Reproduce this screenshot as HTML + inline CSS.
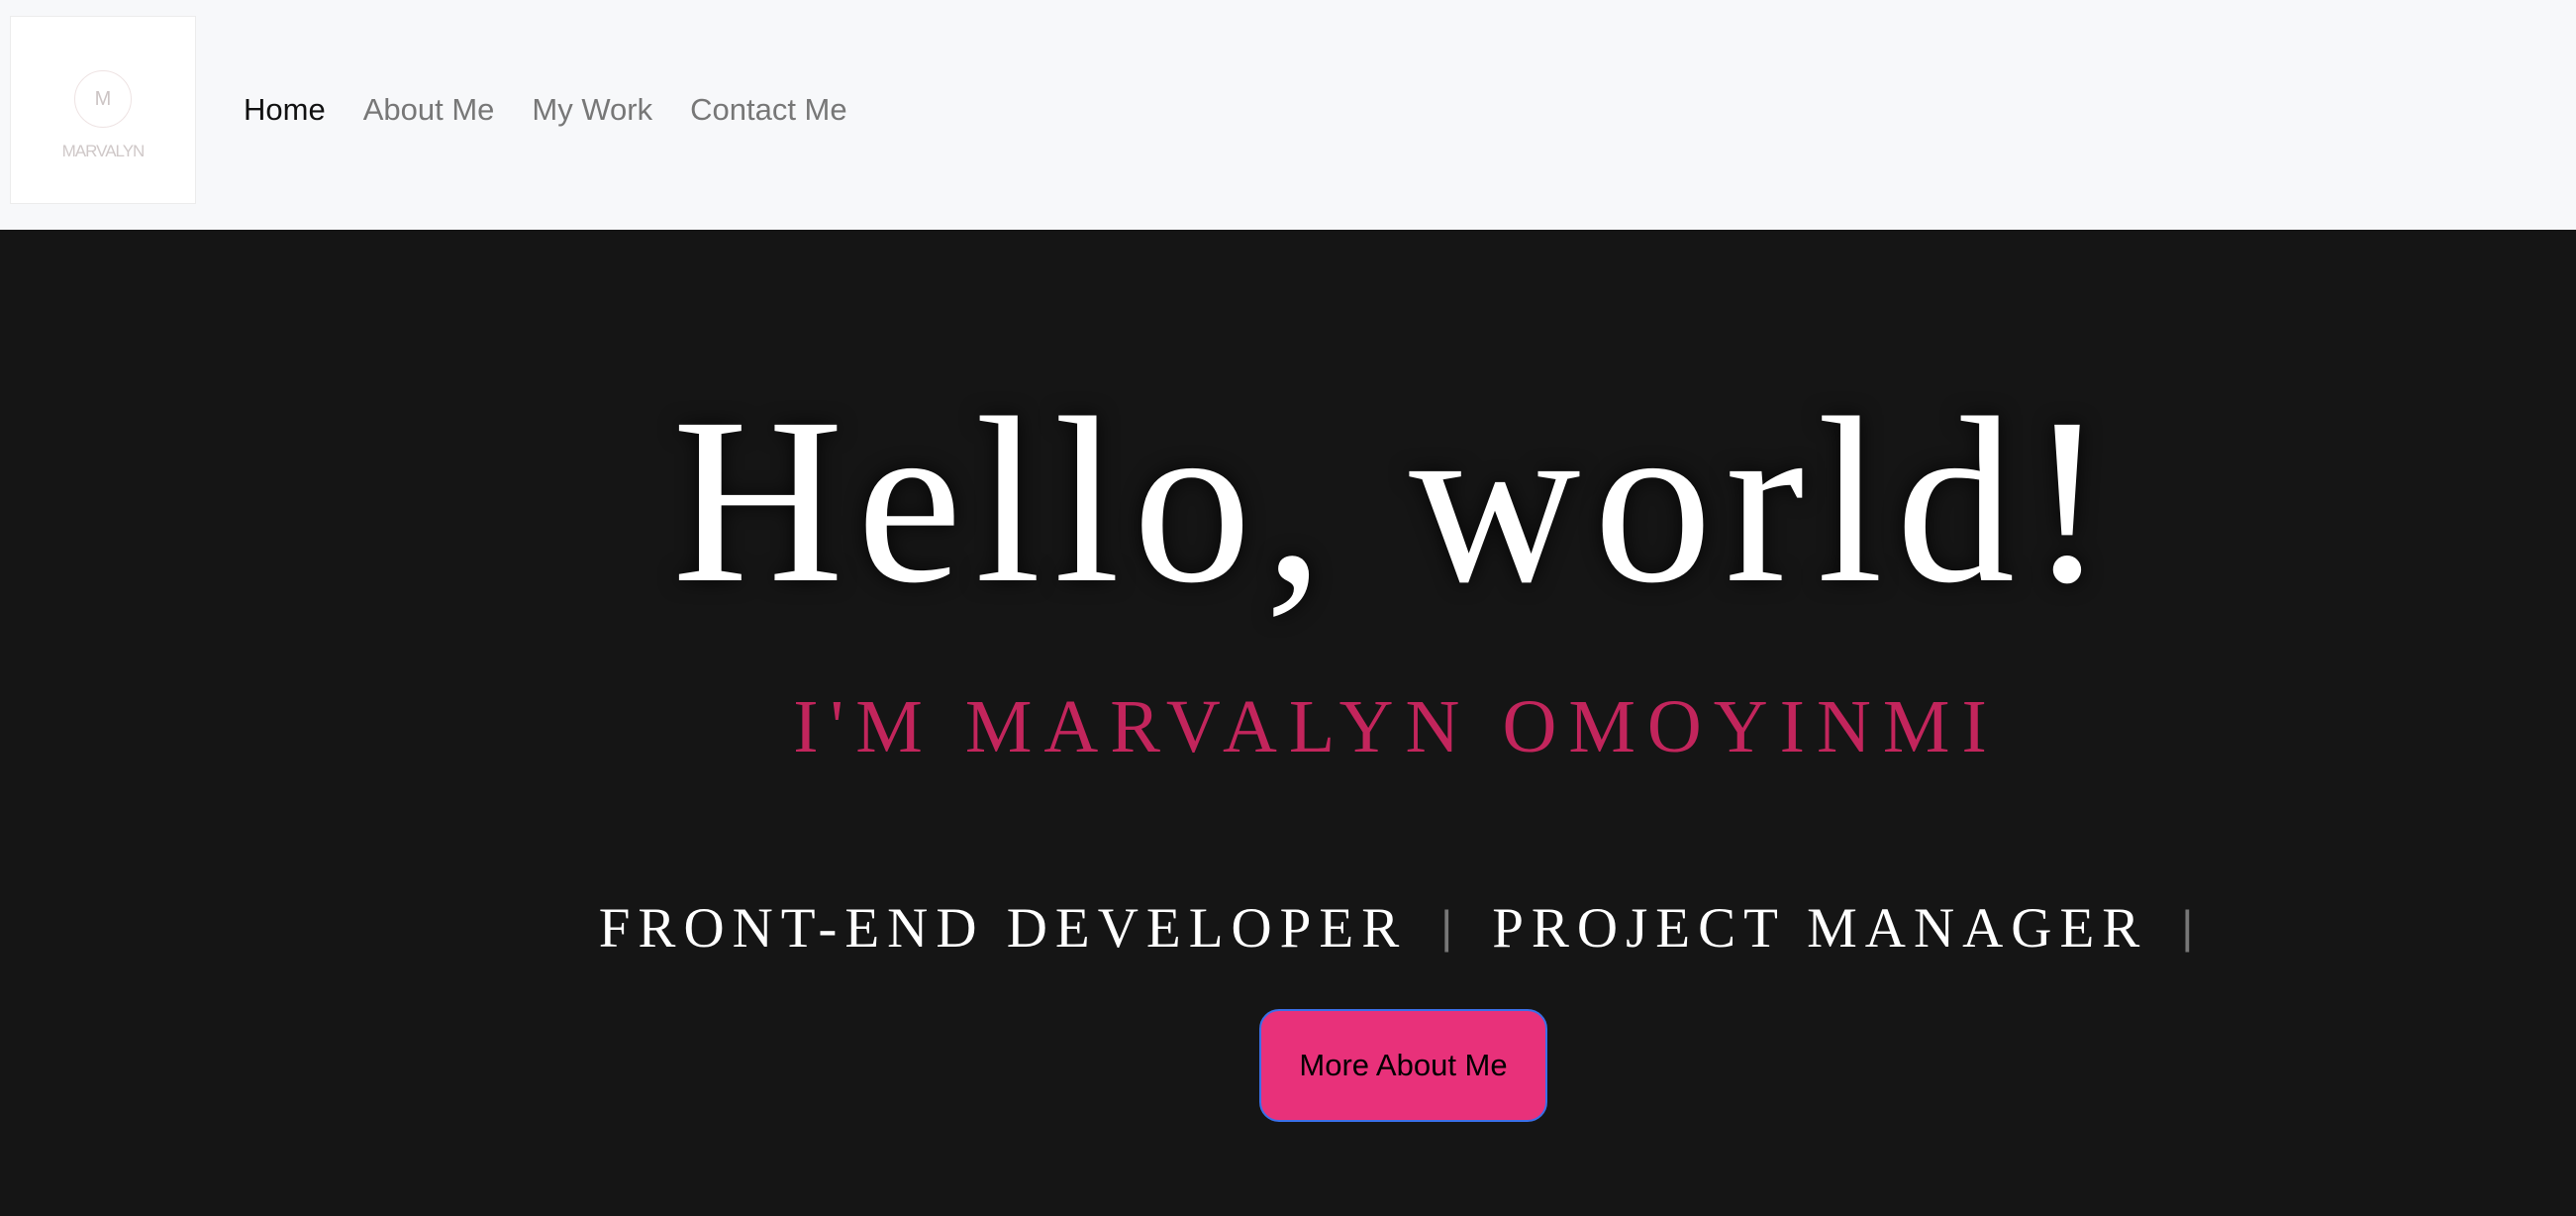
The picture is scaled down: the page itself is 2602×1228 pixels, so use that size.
<!DOCTYPE html>
<html><head><meta charset="utf-8"><style>
html,body{margin:0;padding:0;width:2602px;height:1228px;overflow:hidden;background:#151515;}
.nav{position:absolute;left:0;top:0;width:2602px;height:232px;background:#f7f8fa;}
.logo{position:absolute;left:10px;top:16px;width:186px;height:188px;background:#fff;border:1px solid #ececec;}
.logo .c{position:absolute;left:64px;top:54px;width:56px;height:56px;border:1.5px solid #eee3e3;border-radius:50%;text-align:center;font-family:"Liberation Sans",sans-serif;font-size:20px;line-height:56px;color:#ccc4c4;}
.logo .t{position:absolute;left:0;width:186px;top:126px;text-align:center;font-family:"Liberation Sans",sans-serif;font-size:17px;color:#cfc8c8;letter-spacing:-1px;}
.links{position:absolute;left:246px;top:93px;font-family:"Liberation Sans",sans-serif;font-size:31px;color:#777;white-space:nowrap;}
.links span{margin-right:38px}
.links .a{color:#111}
.c1{position:absolute;left:218px;width:2384px;text-align:center;font-family:"Liberation Serif",serif;white-space:nowrap;}
h1{margin:0;}
.hello{top:378px;font-size:240px;line-height:254px;color:#fff;letter-spacing:13px;font-weight:normal;text-shadow:0 0 20px rgba(0,0,0,.8);}
.sub{top:684px;font-size:76px;line-height:100px;color:#c2255c;letter-spacing:12px;}
.roles{top:898px;font-size:57px;line-height:80px;color:#fff;letter-spacing:8px;}
.roles .bar{color:#777;font-family:"Liberation Sans",sans-serif;font-size:46px;margin:0 40px 0 34px;letter-spacing:0;position:relative;top:-4px}
.btn{position:absolute;left:1272px;top:1019px;width:287px;height:110px;background:#e8317a;border:2px solid #3a6fe8;border-radius:20px;text-align:center;font-family:"Liberation Sans",sans-serif;font-size:31px;line-height:110px;color:#000;}
</style></head><body>
<div class="nav">
 <div class="logo"><div class="c">M</div><div class="t">MARVALYN</div></div>
 <div class="links"><span class="a">Home</span><span>About Me</span><span>My Work</span><span>Contact Me</span></div>
</div>
<h1 class="c1 hello">Hello, world!</h1>
<div class="c1 sub">I'M MARVALYN OMOYINMI</div>
<div class="c1 roles">FRONT-END DEVELOPER<span class="bar">|</span>PROJECT MANAGER<span class="bar" style="margin-right:0">|</span></div>
<div class="btn">More About Me</div>
</body></html>
